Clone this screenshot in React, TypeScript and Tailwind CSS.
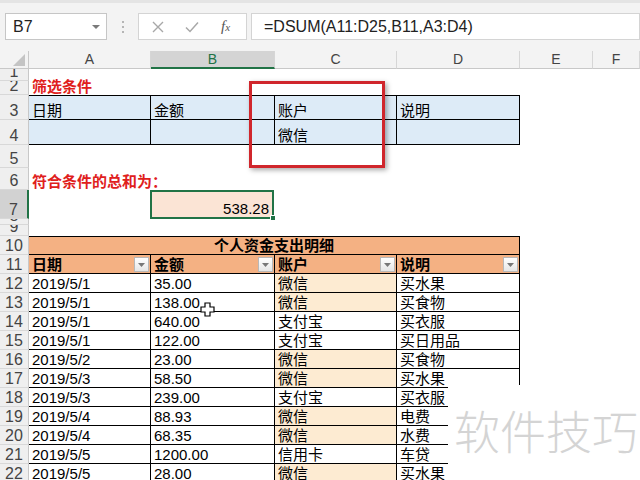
import React from 'react'

const FONT = "font-['Liberation_Sans','Noto_Sans_CJK_SC',sans-serif]"

const COLS = ['w-[122px]', 'w-[124px]', 'w-[122px]', 'w-[123px]', 'w-[73px]', 'flex-1']

const rows = [
    ['2019/5/1', '35.00', '微信', '买水果'],
    ['2019/5/1', '138.00', '微信', '买食物'],
    ['2019/5/1', '640.00', '支付宝', '买衣服'],
    ['2019/5/1', '122.00', '支付宝', '买日用品'],
    ['2019/5/2', '23.00', '微信', '买食物'],
    ['2019/5/3', '58.50', '微信', '买水果'],
    ['2019/5/3', '239.00', '支付宝', '买衣服'],
    ['2019/5/4', '88.93', '微信', '电费'],
    ['2019/5/4', '68.35', '微信', '水费'],
    ['2019/5/5', '1200.00', '信用卡', '车贷'],
    ['2019/5/5', '28.00', '微信', '买水果'],
]

const RowHead = ({ n, sel }: { n: string; sel?: boolean }) => (
    <div
        className={`w-[29px] shrink-0 flex items-end justify-center overflow-hidden border-b border-[#d8d8d8] text-[16px] leading-[14px] text-[#444] ${
            sel ? 'bg-[#d2d2d2] border-r-2 border-r-[#217346]' : 'bg-[#efefef] border-r border-r-[#c8c8c8]'
        }`}
    >
        <span className="pb-[1px]">{n}</span>
    </div>
)

const Row = ({ n, h, sel, children }: { n: string; h: string; sel?: boolean; children?: React.ReactNode }) => (
    <div className={`flex ${h}`}>
        <RowHead n={n} sel={sel} />
        {children}
    </div>
)

const Cell = ({ i, className = '', children }: { i: number; className?: string; children?: React.ReactNode }) => (
    <div className={`${COLS[i]} shrink-0 relative flex items-end px-[3px] whitespace-nowrap ${className}`}>
        <span className="leading-[14px] pb-[1px]">{children}</span>
    </div>
)

const FilterBtn = () => (
    <span className="absolute right-[1px] bottom-[1px] w-[15px] h-[15px] border border-[#b8b8b8] bg-gradient-to-b from-white to-[#e6e6e6] flex items-center justify-center">
        <svg width="7" height="4" viewBox="0 0 7 4">
            <path d="M0 0h7L3.5 4z" fill="#777" />
        </svg>
    </span>
)

const FormulaBar = () => (
    <div className="h-[51px] bg-[#f3f3f3] border-t-[3px] border-[#e4e4e4] flex items-start pt-[10px] pl-[5px]">
        <div className="w-[102px] h-[27px] bg-white border border-[#c6c6c6] flex items-center justify-between pl-[7px] pr-[6px]">
            <span className="text-[16px] text-[#222]">B7</span>
            <svg width="8" height="4" viewBox="0 0 8 4">
                <path d="M0 0h8L4 4z" fill="#7a7a7a" />
            </svg>
        </div>
        <div className="w-[31px] h-[27px] flex flex-col items-center justify-center gap-[3px]">
            <span className="w-[2px] h-[2px] bg-[#b5b5b5]" />
            <span className="w-[2px] h-[2px] bg-[#b5b5b5]" />
            <span className="w-[2px] h-[2px] bg-[#b5b5b5]" />
        </div>
        <div className="w-[109px] h-[27px] bg-white border border-[#d4d4d4] flex items-center">
            <svg width="12" height="12" viewBox="0 0 12 12" className="ml-[13px]">
                <path d="M1 1l10 10M11 1L1 11" stroke="#a8a8a8" strokeWidth="1.4" />
            </svg>
            <svg width="14" height="12" viewBox="0 0 14 12" className="ml-[21px]">
                <path d="M1 6.5l4 4L13 1.5" stroke="#a8a8a8" strokeWidth="1.5" fill="none" />
            </svg>
            <span className="ml-[22px] font-['Liberation_Serif',serif] italic text-[15px] text-[#555]">
                f<span className="text-[11px]">x</span>
            </span>
        </div>
        <div className="flex-1 ml-[4px] h-[27px] bg-white border border-[#d4d4d4] flex items-center pl-[12px]">
            <span className="text-[16px] text-[#222]">=DSUM(A11:D25,B11,A3:D4)</span>
        </div>
    </div>
)

const ColHeads = () => (
    <div className="flex h-[18px] bg-[#f3f3f3] text-[14px] text-[#444]">
        <div className="w-[29px] shrink-0 relative border-r border-b border-[#c8c8c8]">
            <svg width="12" height="12" viewBox="0 0 12 12" className="absolute right-[3px] bottom-[2px]">
                <path d="M12 0v12H0z" fill="#c4c4c4" />
            </svg>
        </div>
        {['A', 'B', 'C', 'D', 'E', 'F'].map((c, i) => (
            <div
                key={c}
                className={`${COLS[i]} shrink-0 flex items-center justify-center border-r border-[#d6d6d6] ${
                    c === 'B' ? 'bg-[#d4d4d4] border-b-2 border-b-[#217346] text-[#217346]' : 'border-b border-b-[#c8c8c8]'
                }`}
            >
                {c}
            </div>
        ))}
    </div>
)

export default function App() {
    const crit = 'bg-[#ddebf7] border-r border-b border-black'
    const tb = 'border-r border-b border-black'
    return (
        <div className={`relative w-[640px] h-[480px] overflow-hidden bg-white text-black ${FONT}`}>
            <FormulaBar />
            <ColHeads />

            <div className="text-[15px]">
                <Row n="1" h="h-[12px]" />
                <Row n="2" h="h-[14px]">
                    <Cell i={0} className="text-[#e0201c] font-bold">筛选条件</Cell>
                </Row>
                <Row n="3" h="h-[25px]">
                    <Cell i={0} className={`${crit} border-t`}>日期</Cell>
                    <Cell i={1} className={`${crit} border-t`}>金额</Cell>
                    <Cell i={2} className={`${crit} border-t`}>账户</Cell>
                    <Cell i={3} className={`${crit} border-t`}>说明</Cell>
                </Row>
                <Row n="4" h="h-[25px]">
                    <Cell i={0} className={crit} />
                    <Cell i={1} className={crit} />
                    <Cell i={2} className={crit}>微信</Cell>
                    <Cell i={3} className={crit} />
                </Row>
                <Row n="5" h="h-[23px]" />
                <Row n="6" h="h-[22px]">
                    <Cell i={0} className="text-[#e0201c] font-bold">符合条件的总和为：</Cell>
                </Row>
                <Row n="7" h="h-[29px]" sel>
                    <Cell i={0} />
                    <Cell i={1} className="justify-end bg-[#fbe4d5] border-2 border-[#217346] ml-[-1px]">
                        538.28
                        <span className="absolute right-[-4px] bottom-[-4px] w-[6px] h-[6px] bg-[#217346] border border-white" />
                    </Cell>
                </Row>
                <Row n="8" h="h-[6px]" />
                <Row n="9" h="h-[11px]" />
                <Row n="10" h="h-[19px]">
                    <div className="w-[491px] shrink-0 flex items-end justify-center bg-[#f4b183] border-t border-r border-b border-black font-bold">
                        <span className="leading-[14px] pb-[1px]">个人资金支出明细</span>
                    </div>
                </Row>
                <Row n="11" h="h-[19px]">
                    {['日期', '金额', '账户', '说明'].map((t, i) => (
                        <Cell key={t} i={i} className={`bg-[#f4b183] font-bold ${tb}`}>
                            {t}
                            <FilterBtn />
                        </Cell>
                    ))}
                </Row>
                {rows.map((r, k) => (
                    <Row key={k} n={String(12 + k)} h="h-[19px]">
                        <Cell i={0} className={tb}>{r[0]}</Cell>
                        <Cell i={1} className={tb}>{r[1]}</Cell>
                        <Cell i={2} className={`${tb} ${r[2] === '微信' ? 'bg-[#fdebd2]' : ''}`}>{r[2]}</Cell>
                        <Cell i={3} className={tb}>{r[3]}</Cell>
                    </Row>
                ))}
            </div>

            {/* red highlight box */}
            <div className="absolute left-[249px] top-[81px] w-[136px] h-[87px] border-[3px] border-[#d0262c] shadow-[2px_2px_5px_rgba(0,0,0,0.35)]" />

            {/* excel cursor */}
            <svg width="15" height="15" viewBox="0 0 15 15" className="absolute left-[200px] top-[302px]">
                <path d="M5 1h5v4h4v5h-4v4H5v-4H1V5h4z" fill="#fff" stroke="#000" strokeWidth="1.2" />
            </svg>

            {/* watermark */}
            <div className="absolute left-[448px] top-[385px] right-0 bottom-0 bg-white">
                <div className="pl-[6px] pt-[21px] text-[46px] leading-[46px] text-[#d4d4d4] font-['Noto_Sans_CJK_SC',sans-serif] font-light">
                    软件技巧
                </div>
            </div>
        </div>
    )
}
